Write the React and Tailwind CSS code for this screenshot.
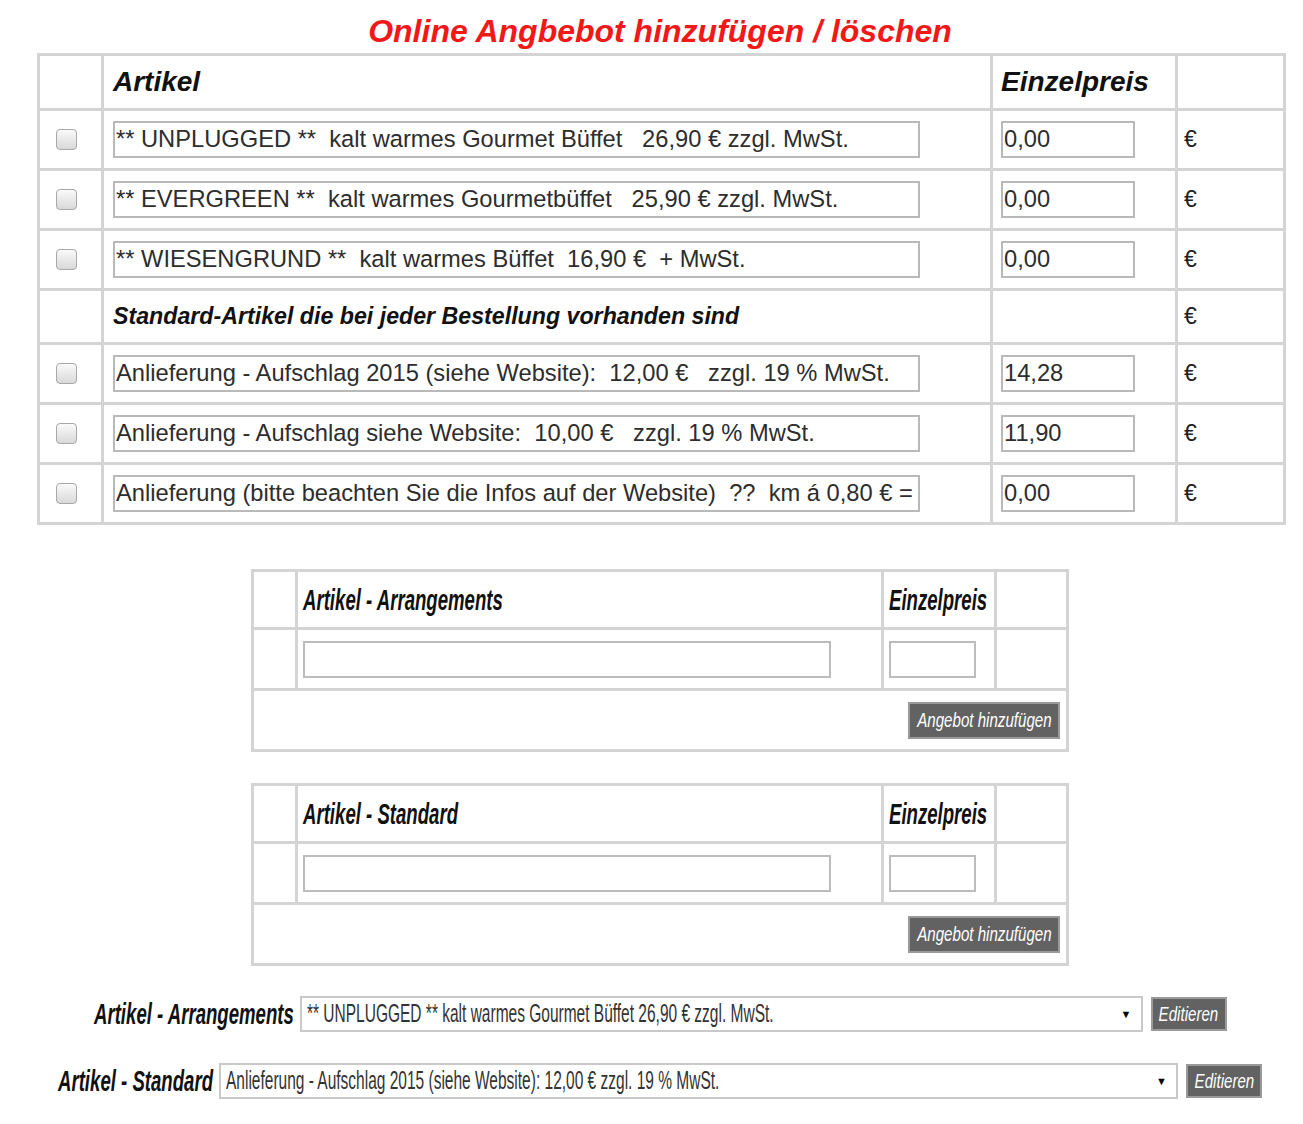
import { useState } from 'react';

const mainRows = [
  { text: '** UNPLUGGED **  kalt warmes Gourmet Büffet   26,90 € zzgl. MwSt.', price: '0,00' },
  { text: '** EVERGREEN **  kalt warmes Gourmetbüffet   25,90 € zzgl. MwSt.', price: '0,00' },
  { text: '** WIESENGRUND **  kalt warmes Büffet  16,90 €  + MwSt.', price: '0,00' },
];

const standardRows = [
  { text: 'Anlieferung - Aufschlag 2015 (siehe Website):  12,00 €   zzgl. 19 % MwSt.', price: '14,28' },
  { text: 'Anlieferung - Aufschlag siehe Website:  10,00 €   zzgl. 19 % MwSt.', price: '11,90' },
  { text: 'Anlieferung (bitte beachten Sie die Infos auf der Website)  ??  km á 0,80 € =', price: '0,00' },
];

const cell = 'border-[3px] border-[#d4d4d4] p-0';

// no condensed face is installed, so the narrow texts are squeezed horizontally
function Squeeze({ children, className = '' }) {
  return (
    <span className={`inline-block whitespace-nowrap scale-x-[0.62] ${className}`}>{children}</span>
  );
}

function Check() {
  const [on, setOn] = useState(false);
  return (
    <input
      type="checkbox"
      checked={on}
      onChange={() => setOn(!on)}
      className="appearance-none block ml-[16px] w-[21px] h-[21px] rounded-[4px] border border-[#a8a8a8] bg-gradient-to-b from-[#fafafa] to-[#d9d9d9] checked:bg-[#4a90d9]"
    />
  );
}

function ItemRow({ text, price }) {
  return (
    <tr>
      <td className={`${cell} h-[60px]`}>
        <Check />
      </td>
      <td className={`${cell} pl-[9px]`}>
        <input
          readOnly
          defaultValue={text}
          className="block w-[807px] h-[37px] border-2 border-[#b9b9b9] px-[1px] text-[23.7px] text-[#2d2d2d] outline-none"
        />
      </td>
      <td className={`${cell} pl-[8px]`}>
        <input
          readOnly
          defaultValue={price}
          className="block w-[134px] h-[37px] border-2 border-[#b9b9b9] px-[1px] text-[23.7px] text-[#2d2d2d] outline-none"
        />
      </td>
      <td className={`${cell} pl-[6px] text-[23px] text-[#222]`}>€</td>
    </tr>
  );
}

function GreyButton({ label, className }) {
  return (
    <button
      type="button"
      className={`flex items-center justify-center overflow-visible border-2 border-[#9a9a9a] bg-[#626262] text-[21px] italic text-white ${className}`}
    >
      <span className="inline-block whitespace-nowrap scale-x-[0.72]">{label}</span>
    </button>
  );
}

function AddTable({ title }) {
  return (
    <table className="mx-auto w-[815px] table-fixed border-collapse border-[3px] border-[#d4d4d4]">
      <colgroup>
        <col className="w-[44px]" />
        <col className="w-[586px]" />
        <col className="w-[113px]" />
        <col className="w-[72px]" />
      </colgroup>
      <tbody>
        <tr>
          <td className={`${cell} h-[58px]`}></td>
          <td className={`${cell} pl-[5px] text-[30px] font-bold italic text-[#111]`}>
            <Squeeze className="origin-left">{title}</Squeeze>
          </td>
          <td className={`${cell} pl-[5px] text-[30px] font-bold italic text-[#111]`}>
            <Squeeze className="origin-left">Einzelpreis</Squeeze>
          </td>
          <td className={cell}></td>
        </tr>
        <tr>
          <td className={`${cell} h-[61px]`}></td>
          <td className={`${cell} pl-[5px]`}>
            <input readOnly className="block w-[528px] h-[37px] border-2 border-[#bcbcbc] outline-none" />
          </td>
          <td className={`${cell} pl-[5px]`}>
            <input readOnly className="block w-[87px] h-[37px] border-2 border-[#bcbcbc] outline-none" />
          </td>
          <td className={cell}></td>
        </tr>
        <tr>
          <td colSpan={4} className={`${cell} h-[61px] pr-[6px]`}>
            <div className="flex justify-end">
              <GreyButton label="Angebot hinzufügen" className="h-[37px] w-[152px]" />
            </div>
          </td>
        </tr>
      </tbody>
    </table>
  );
}

function PickRow({ label, labelWidth, value, boxWidth }) {
  return (
    <div className="flex h-[36px] items-center justify-center">
      <span className={`relative block h-[36px] text-[30px] leading-[36px] font-bold italic text-[#111] ${labelWidth}`}>
        <Squeeze className="origin-left">{label}</Squeeze>
      </span>
      <div
        role="combobox"
        className={`relative ml-[5px] flex h-[36px] items-center overflow-hidden border-2 border-[#c9c9c9] bg-white pl-[5px] text-[25px] text-[#333] ${boxWidth}`}
      >
        <Squeeze className="origin-left">{value}</Squeeze>
        <span className="absolute right-[9px] top-[8px] text-[11px] text-black">▼</span>
      </div>
      <GreyButton label="Editieren" className="ml-[8px] h-[34px] w-[76px]" />
    </div>
  );
}

export default function App() {
  return (
    <div className="w-[1303px] min-h-[1124px] bg-white font-['Liberation_Sans',Arial,sans-serif]">
      <div className="ml-[37px] w-[1246px]">
        <h1 className="pt-[13px] pb-[4px] text-center text-[32px] leading-[36px] font-bold italic text-[#f31818]">
          Online Angbebot hinzufügen / löschen
        </h1>

        <table className="w-[1246px] table-fixed border-collapse border-[3px] border-[#d4d4d4]">
          <colgroup>
            <col className="w-[64px]" />
            <col className="w-[889px]" />
            <col className="w-[185px]" />
            <col className="w-[108px]" />
          </colgroup>
          <tbody>
            <tr>
              <td className={`${cell} h-[55px]`}></td>
              <td className={`${cell} pl-[9px] text-[28px] font-bold italic text-[#111]`}>Artikel</td>
              <td className={`${cell} pl-[8px] text-[28px] font-bold italic text-[#111]`}>Einzelpreis</td>
              <td className={cell}></td>
            </tr>
            {mainRows.map((r) => (
              <ItemRow key={r.text} {...r} />
            ))}
            <tr>
              <td className={`${cell} h-[54px]`}></td>
              <td className={`${cell} pl-[9px] text-[23.2px] font-bold italic text-[#111]`}>
                Standard-Artikel die bei jeder Bestellung vorhanden sind
              </td>
              <td className={cell}></td>
              <td className={`${cell} pl-[6px] text-[23px] text-[#222]`}>€</td>
            </tr>
            {standardRows.map((r) => (
              <ItemRow key={r.text} {...r} />
            ))}
          </tbody>
        </table>

        <div className="mt-[44px] flex flex-col gap-[31px]">
          <AddTable title="Artikel - Arrangements" />
          <AddTable title="Artikel - Standard" />
        </div>

        <div className="mt-[30px] flex flex-col gap-[31px] pb-[20px]">
          <PickRow
            label="Artikel - Arrangements"
            labelWidth="w-[201px]"
            value="** UNPLUGGED ** kalt warmes Gourmet Büffet 26,90 € zzgl. MwSt."
            boxWidth="w-[843px]"
          />
          <PickRow
            label="Artikel - Standard"
            labelWidth="w-[156px]"
            value="Anlieferung - Aufschlag 2015 (siehe Website): 12,00 € zzgl. 19 % MwSt."
            boxWidth="w-[959px]"
          />
        </div>
      </div>
    </div>
  );
}
